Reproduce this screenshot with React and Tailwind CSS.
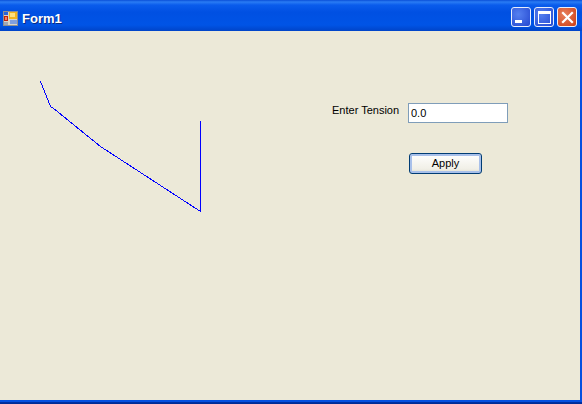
const font = { fontFamily: '"Liberation Sans", Arial, sans-serif' }

function AppIcon() {
  return (
    <svg width="15" height="15" viewBox="0 0 15 15" shapeRendering="crispEdges" className="mt-[5px]">
      <rect x="0.5" y="0.5" width="14" height="14" fill="#d8d4c8" stroke="#8f8f8f" />
      <rect x="1" y="1" width="4" height="3" fill="#2a62d8" />
      <rect x="1" y="5" width="4" height="5" fill="#c02010" />
      <rect x="2" y="6" width="2" height="3" fill="#f08060" />
      <rect x="6" y="1" width="8" height="7" fill="#f2b520" />
      <rect x="7" y="2" width="5" height="4" fill="#fde080" />
      <rect x="7" y="9" width="7" height="4" fill="#7f9fdf" />
      <rect x="1" y="11" width="4" height="3" fill="#a0a8b8" />
    </svg>
  )
}

function WinButton({ className, children }) {
  return (
    <div className={`w-[20px] h-[20px] rounded-[3px] border border-[#e8eefc] flex items-center justify-center ${className}`}>
      {children}
    </div>
  )
}

export default function App() {
  return (
    <div className="w-[582px] h-[404px] flex flex-col overflow-hidden bg-[#ece9d8]" style={font}>
      {/* Title bar */}
      <div className="h-[31px] shrink-0 flex items-center pl-[3px] pr-[5px] bg-[linear-gradient(180deg,#0a4fd8_0px,#2a7cf4_2px,#0a5cec_5px,#0050e2_12px,#0054e6_25px,#0044c8_31px)]">
        <AppIcon />
        <span className="ml-[4px] mt-[5px] text-[13px] font-bold text-white leading-none [text-shadow:1px_1px_0_#0a2a80]">Form1</span>
        <div className="ml-auto flex gap-[3px] mt-[3px]">
          <WinButton className="bg-[radial-gradient(circle_at_35%_35%,#5580f0,#2448d0)]">
            <div className="w-[7px] h-[3px] bg-white mt-[9px] mr-[5px]" />
          </WinButton>
          <WinButton className="bg-[radial-gradient(circle_at_35%_35%,#5580f0,#2448d0)]">
            <div className="w-[13px] h-[13px] border border-white border-t-[3px]" />
          </WinButton>
          <WinButton className="bg-[radial-gradient(circle_at_35%_35%,#e8805c,#cc3c14)]">
            <svg width="13" height="13" viewBox="0 0 13 13">
              <path d="M2 2L11 11M11 2L2 11" stroke="#fff" strokeWidth="2.2" strokeLinecap="square" />
            </svg>
          </WinButton>
        </div>
      </div>

      {/* Client area */}
      <div className="flex-1 flex border-r-[2px] border-r-[#0550e0]">
        <svg width="210" height="190" className="shrink-0" shapeRendering="crispEdges">
          <polyline
            points="40.5,50.5 50.5,75.5 53,77 100.5,115.5 200.5,180.5 200.5,89.5"
            fill="none"
            stroke="#0000ff"
            strokeWidth="1"
          />
        </svg>
        <div className="ml-[122px] mt-[72px] flex flex-col items-start">
          <div className="flex items-start">
            <span className="text-[11px] leading-[13px] text-black w-[76px] mt-[1px]">Enter Tension</span>
            <input
              readOnly
              value="0.0"
              className="w-[100px] h-[20px] bg-white border border-[#7f9db9] pl-[2px] text-[11px] text-black outline-none"
            />
          </div>
          <button className="ml-[77px] mt-[30px] w-[73px] h-[21px] rounded-[3px] border border-[#003c74] bg-[linear-gradient(180deg,#ffffff,#f0efe6_80%,#dcd8c8)] shadow-[inset_0_0_0_2px_#a8c0ea,inset_0_-2px_0_#6f8fdc] text-[11px] text-black leading-none">
            Apply
          </button>
        </div>
      </div>

      {/* Bottom frame */}
      <div className="h-[4px] shrink-0 bg-[linear-gradient(180deg,#0550e0_0px,#0550e0_2px,#0030a8_2px,#002a90_4px)]" />
    </div>
  )
}
